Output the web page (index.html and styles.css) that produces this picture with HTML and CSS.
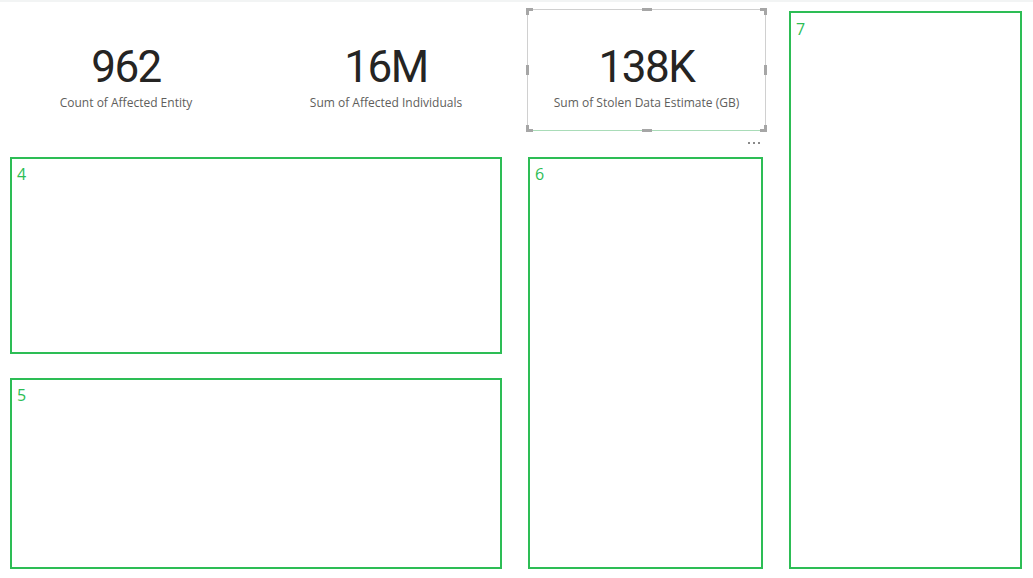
FILE: index.html
```html
<!DOCTYPE html>
<html>
	<head>
		<meta charset="UTF-8">
		<title>Report</title>
		<link rel="stylesheet" href="styles.css">
	</head>
	<body>
		<div class="page">
			<div class="kpis">
				<div class="kpi">
					<div class="kpi_value">962</div>
					<div class="kpi_label">Count of Affected Entity</div>
				</div>
				<div class="kpi">
					<div class="kpi_value">16M</div>
					<div class="kpi_label">Sum of Affected Individuals</div>
				</div>
			</div>
			<div class="kpi kpi_selected">
				<div class="kpi_value">138K</div>
				<div class="kpi_label">Sum of Stolen Data Estimate (GB)</div>
				<span class="hd hd_tl"></span>
				<span class="hd hd_tr"></span>
				<span class="hd hd_bl"></span>
				<span class="hd hd_br"></span>
				<span class="hm hm_t"></span>
				<span class="hm hm_b"></span>
				<span class="hm hm_l"></span>
				<span class="hm hm_r"></span>
				<span class="more"><i></i><i></i><i></i></span>
			</div>
			<div class="slot slot_7">7</div>
			<div class="slot slot_4">4</div>
			<div class="slot slot_6">6</div>
			<div class="slot slot_5">5</div>
		</div>
	</body>
</html>
```

FILE: styles.css
```css
*{
	padding: 0;
	margin: 0;
	box-sizing: border-box;
}
body{
	background: #ffffff;
	font-family: "Open Sans", "Liberation Sans", sans-serif;
}
.page{
	width: 1033px;
	height: 578px;
	border-top: 2px solid #f2f4f4;
	padding: 7px 0 0 10px;
	display: grid;
	grid-template-columns: 492px 235px 233px;
	grid-template-rows: 124px 197px 191px;
	column-gap: 26px;
	row-gap: 24px;
}
/* kpi cards */
.kpis{
	grid-column: 1;
	grid-row: 1;
	display: flex;
	gap: 28px;
	height: 122px;
}
.kpi{
	position: relative;
	width: 232px;
	height: 122px;
	display: flex;
	flex-direction: column;
	align-items: center;
	padding-top: 32px;
}
.kpi_value{
	font-family: Roboto, "Liberation Sans", sans-serif;
	font-size: 44px;
	line-height: 52px;
	letter-spacing: -1.5px;
	color: #252423;
}
.kpi_label{
	font-size: 12px;
	line-height: 16px;
	color: #605e5c;
	margin-top: 2px;
}
.kpi_selected{
	grid-column: 2;
	grid-row: 1;
	width: auto;
	margin: 0 -3px 0 -1px;
	border: 1px solid #d0d0d0;
	border-bottom-color: #a9dcb8;
	padding-top: 31px;
}
.hd{
	position: absolute;
	width: 7px;
	height: 7px;
	border-color: #a6a6a6;
	border-style: solid;
	border-width: 0;
}
.hd_tl{ top: -2px; left: -2px; border-top-width: 3px; border-left-width: 3px; }
.hd_tr{ top: -2px; right: -2px; border-top-width: 3px; border-right-width: 3px; }
.hd_bl{ bottom: -2px; left: -2px; border-bottom-width: 3px; border-left-width: 3px; }
.hd_br{ bottom: -2px; right: -2px; border-bottom-width: 3px; border-right-width: 3px; }
.hm{
	position: absolute;
	background: #a6a6a6;
}
.hm_t{ top: -2px; left: 50%; width: 10px; height: 3px; margin-left: -5px; }
.hm_b{ bottom: -2px; left: 50%; width: 10px; height: 3px; margin-left: -5px; }
.hm_l{ left: -2px; top: 50%; width: 3px; height: 10px; margin-top: -5px; }
.hm_r{ right: -2px; top: 50%; width: 3px; height: 10px; margin-top: -5px; }
.more{
	position: absolute;
	right: 5px;
	bottom: -14px;
	display: flex;
	gap: 3px;
}
.more i{
	width: 2px;
	height: 2px;
	background: #8a8a8a;
}
/* empty visual slots */
.slot{
	border: 2px solid #2dbd55;
	color: #2dbd55;
	font-family: "Open Sans", "Liberation Sans", sans-serif;
	font-size: 16px;
	line-height: 20px;
	padding: 5px 5px;
}
.slot_4{ grid-column: 1; grid-row: 2; }
.slot_5{ grid-column: 1; grid-row: 3; }
.slot_6{ grid-column: 2; grid-row: 2 / 4; }
.slot_7{ grid-column: 3; grid-row: 1 / 4; margin-top: 2px; padding-top: 6px; }
```
